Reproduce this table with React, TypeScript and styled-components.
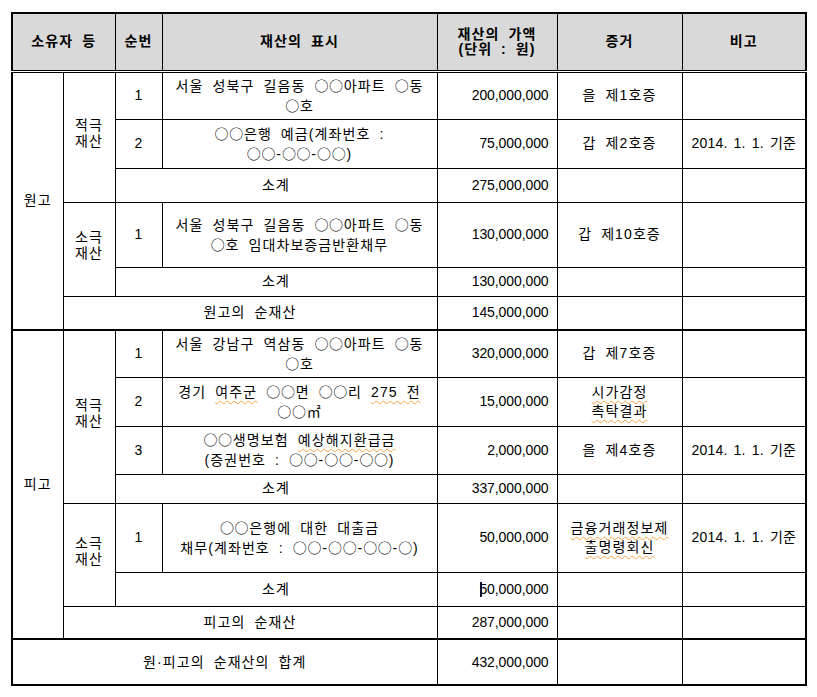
import React from 'react';
import styled, { createGlobalStyle } from 'styled-components';

const Global = createGlobalStyle`
  html, body { margin: 0; padding: 0; background: #fff; }
  body {
    font-family: "Liberation Sans", "Noto Sans CJK KR", sans-serif;
    color: #000;
  }
`;

const Page = styled.div`
  padding: 12px 0 0 11px;
`;

const Table = styled.table`
  border-collapse: collapse;
  table-layout: fixed;
  width: 796px;
  border: 2px solid #000;
  font-size: 14px;
  letter-spacing: 1.1px;
  word-spacing: 4px;
`;

const Row = styled.tr<{ $h: number }>`
  height: ${p => p.$h}px;
`;

const Head = styled.th`
  background: #d9d9d9;
  border: 1px solid #000;
  border-bottom: 3px double #000;
  font-weight: bold;
  line-height: 15px;
  padding: 0;
  text-align: center;
  vertical-align: middle;
  white-space: nowrap;
`;

const Cell = styled.td<{ $end?: boolean }>`
  border: 1px solid #000;
  ${p => (p.$end ? 'border-bottom: 2px solid #000;' : '')}
  padding: 0 4px;
  text-align: center;
  vertical-align: middle;
  white-space: nowrap;
  line-height: 19px;
`;

const Party = styled(Cell)``;

const Kind = styled(Cell)`
  line-height: 16px;
  padding-bottom: 8px;
`;

const Seq = styled(Cell)`
  letter-spacing: 0;
`;

const Desc = styled(Cell)``;

const Amount = styled(Cell)`
  text-align: right;
  padding-right: 8px;
  letter-spacing: -0.1px;
  word-spacing: 0;
`;

const Evidence = styled(Cell)``;

const Note = styled(Cell)`
  letter-spacing: 0.2px;
  word-spacing: 2px;
`;

const Circ = styled.span`
  font-family: "Noto Sans CJK KR", sans-serif;
  letter-spacing: 0.7px;
`;

const Spell = styled.span`
  text-decoration: underline wavy #f5a040;
  text-decoration-thickness: 1px;
  text-underline-offset: 3px;
`;

const Caret = styled.span`
  display: inline-block;
  width: 2px;
  height: 15px;
  margin-right: -3px;
  vertical-align: -3px;
  background: #101030;
  position: relative;
`;

function T({ s }: { s: string }) {
  const parts = s.split(/(○+)/);
  return (
    <>
      {parts.map((p, i) =>
        p.startsWith('○') ? <Circ key={i}>{p}</Circ> : <React.Fragment key={i}>{p}</React.Fragment>
      )}
    </>
  );
}

const NOTE = '2014. 1. 1. 기준';

export default function App() {
  return (
    <>
      <Global />
      <Page>
        <Table>
          <colgroup>
            <col style={{ width: 51 }} />
            <col style={{ width: 52 }} />
            <col style={{ width: 47 }} />
            <col style={{ width: 275 }} />
            <col style={{ width: 120 }} />
            <col style={{ width: 125 }} />
            <col style={{ width: 124 }} />
          </colgroup>
          <thead>
            <Row $h={58}>
              <Head colSpan={2}>소유자 등</Head>
              <Head>순번</Head>
              <Head>재산의 표시</Head>
              <Head>
                재산의 가액
                <br />
                (단위 : 원)
              </Head>
              <Head>증거</Head>
              <Head>비고</Head>
            </Row>
          </thead>
          <tbody>
            <Row $h={48}>
              <Party rowSpan={6} $end>원고</Party>
              <Kind rowSpan={3}>
                적극
                <br />
                재산
              </Kind>
              <Seq>1</Seq>
              <Desc>
                <T s="서울 성북구 길음동 ○○아파트 ○동" />
                <br />
                <T s="○호" />
              </Desc>
              <Amount>200,000,000</Amount>
              <Evidence>을 제1호증</Evidence>
              <Note />
            </Row>
            <Row $h={49}>
              <Seq>2</Seq>
              <Desc>
                <T s="○○은행 예금(계좌번호 :" />
                <br />
                <T s="○○-○○-○○)" />
              </Desc>
              <Amount>75,000,000</Amount>
              <Evidence>갑 제2호증</Evidence>
              <Note>{NOTE}</Note>
            </Row>
            <Row $h={34}>
              <Desc colSpan={2}>소계</Desc>
              <Amount>275,000,000</Amount>
              <Evidence />
              <Note />
            </Row>
            <Row $h={65}>
              <Kind rowSpan={2}>
                소극
                <br />
                재산
              </Kind>
              <Seq>1</Seq>
              <Desc>
                <T s="서울 성북구 길음동 ○○아파트 ○동" />
                <br />
                <T s="○호 임대차보증금반환채무" />
              </Desc>
              <Amount>130,000,000</Amount>
              <Evidence>갑 제10호증</Evidence>
              <Note />
            </Row>
            <Row $h={29}>
              <Desc colSpan={2}>소계</Desc>
              <Amount>130,000,000</Amount>
              <Evidence />
              <Note />
            </Row>
            <Row $h={34}>
              <Desc colSpan={3} $end>원고의 순재산</Desc>
              <Amount $end>145,000,000</Amount>
              <Evidence $end />
              <Note $end />
            </Row>

            <Row $h={47}>
              <Party rowSpan={7} $end>피고</Party>
              <Kind rowSpan={4}>
                적극
                <br />
                재산
              </Kind>
              <Seq>1</Seq>
              <Desc>
                <T s="서울 강남구 역삼동 ○○아파트 ○동" />
                <br />
                <T s="○호" />
              </Desc>
              <Amount>320,000,000</Amount>
              <Evidence>갑 제7호증</Evidence>
              <Note />
            </Row>
            <Row $h={49}>
              <Seq>2</Seq>
              <Desc>
                경기 <Spell>여주군</Spell> <T s="○○면 ○○리" /> <Spell>275 전</Spell>
                <br />
                <T s="○○㎡" />
              </Desc>
              <Amount>15,000,000</Amount>
              <Evidence>
                <Spell>시가감정</Spell>
                <br />
                <Spell>촉탁결과</Spell>
              </Evidence>
              <Note />
            </Row>
            <Row $h={48}>
              <Seq>3</Seq>
              <Desc>
                <T s="○○생명보험 " />
                <Spell>예상해지환급금</Spell>
                <br />
                <T s="(증권번호 : ○○-○○-○○)" />
              </Desc>
              <Amount>2,000,000</Amount>
              <Evidence>을 제4호증</Evidence>
              <Note>{NOTE}</Note>
            </Row>
            <Row $h={29}>
              <Desc colSpan={2}>소계</Desc>
              <Amount>337,000,000</Amount>
              <Evidence />
              <Note />
            </Row>
            <Row $h={69}>
              <Kind rowSpan={2}>
                소극
                <br />
                재산
              </Kind>
              <Seq>1</Seq>
              <Desc>
                <T s="○○은행에 대한 대출금" />
                <br />
                <T s="채무(계좌번호 : ○○-○○-○○-○)" />
              </Desc>
              <Amount>50,000,000</Amount>
              <Evidence>
                <Spell>금융거래정보제</Spell>
                <br />
                <Spell>출명령회신</Spell>
              </Evidence>
              <Note>{NOTE}</Note>
            </Row>
            <Row $h={34}>
              <Desc colSpan={2}>소계</Desc>
              <Amount>
                <Caret />
                50,000,000
              </Amount>
              <Evidence />
              <Note />
            </Row>
            <Row $h={33}>
              <Desc colSpan={3} $end>피고의 순재산</Desc>
              <Amount $end>287,000,000</Amount>
              <Evidence $end />
              <Note $end />
            </Row>

            <Row $h={46}>
              <Desc colSpan={4}>원·피고의 순재산의 합계</Desc>
              <Amount>432,000,000</Amount>
              <Evidence />
              <Note />
            </Row>
          </tbody>
        </Table>
      </Page>
    </>
  );
}
